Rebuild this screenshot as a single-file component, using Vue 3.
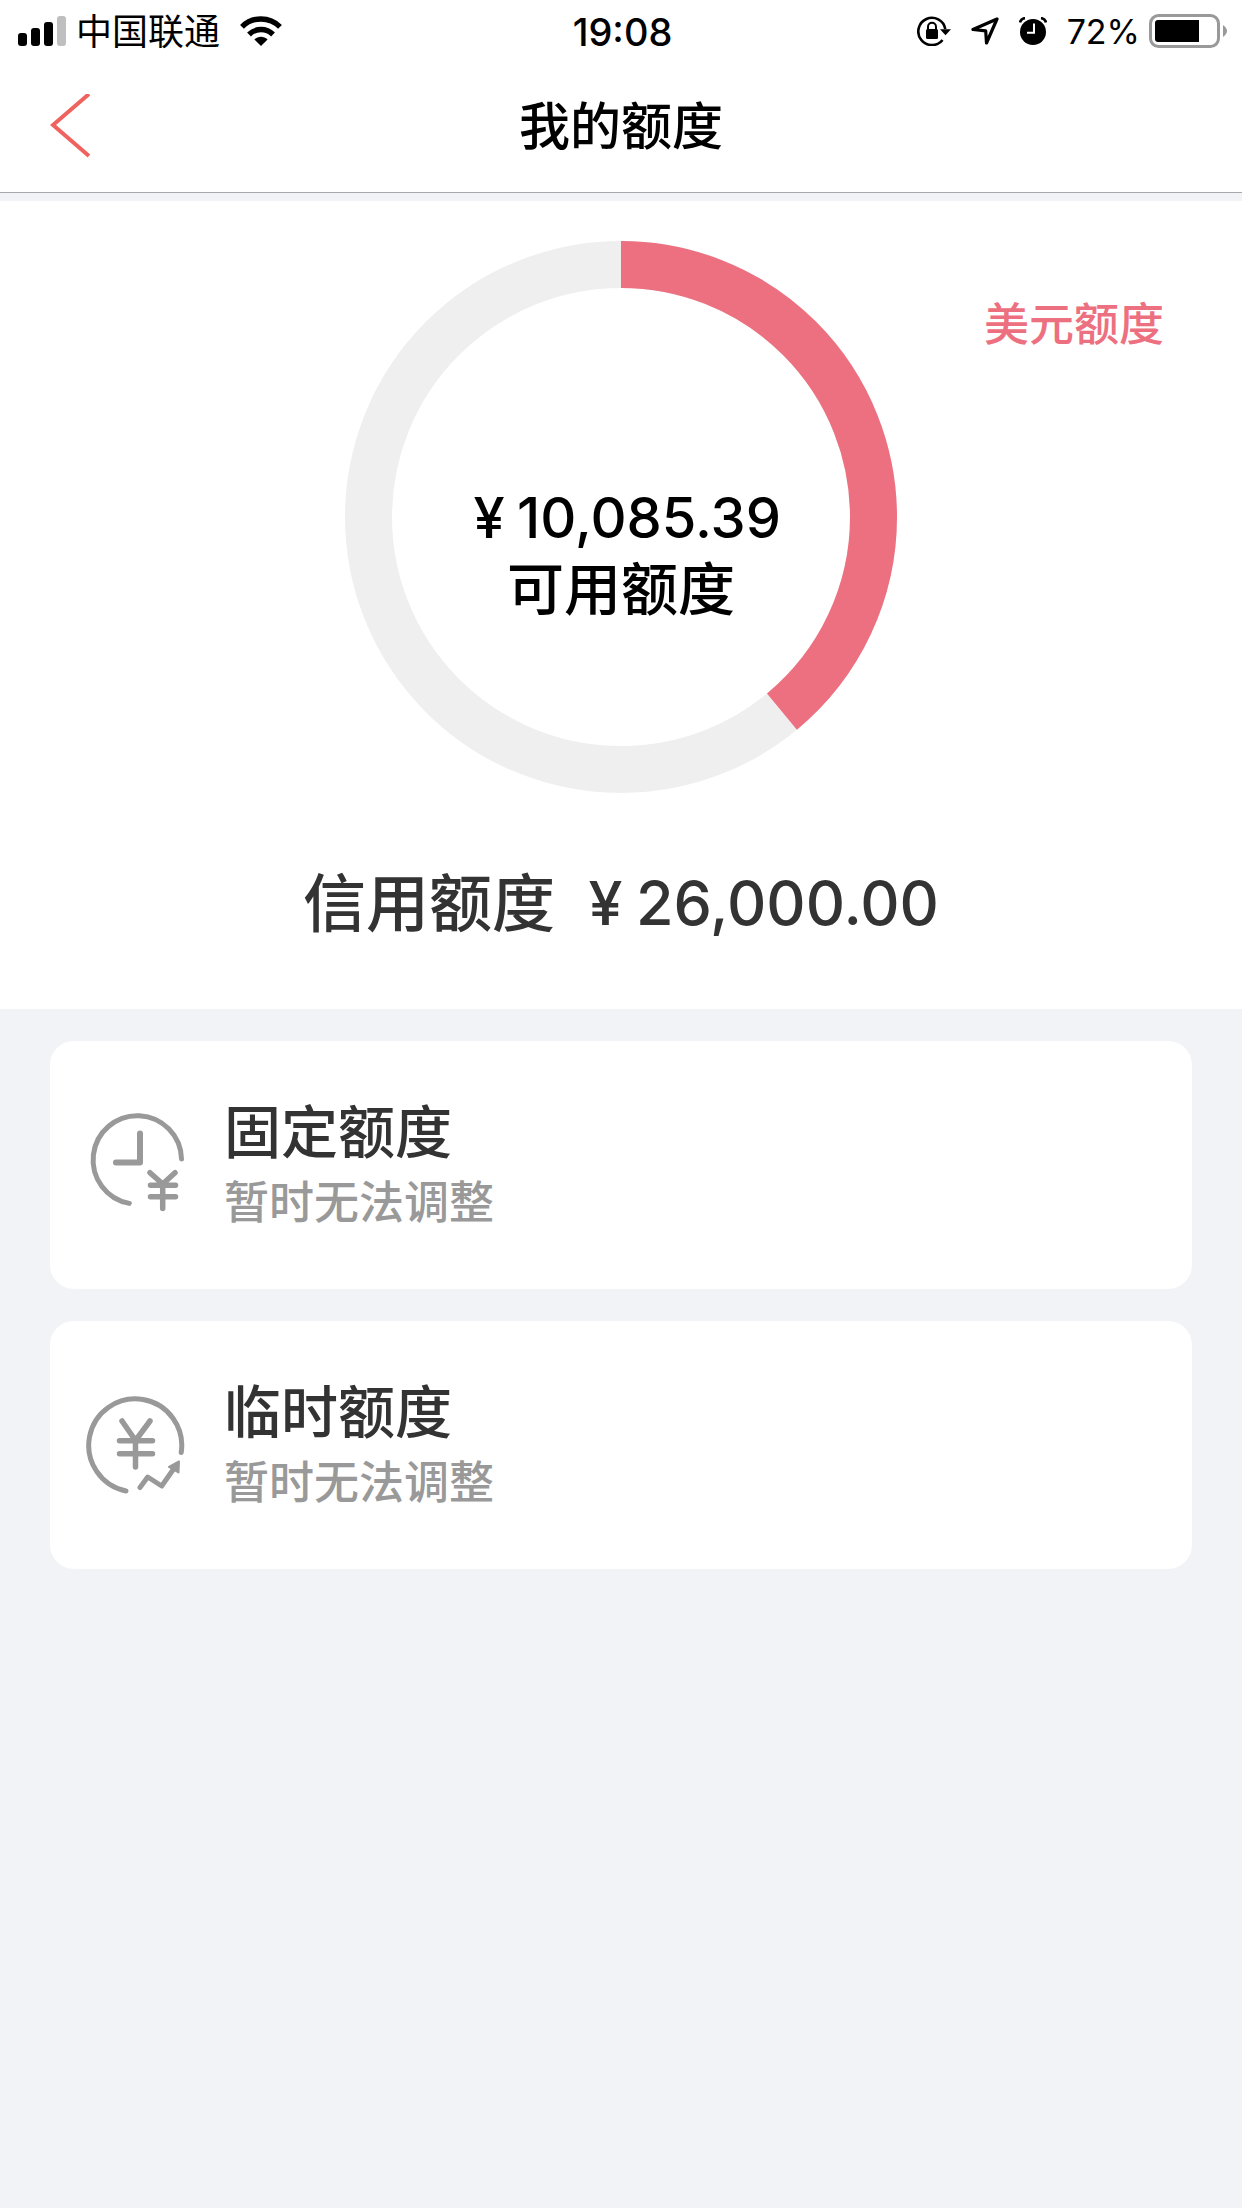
<script setup>
import { computed } from 'vue';

const total = 26000;
const available = 10085.39;

const format = (value) =>
  value.toLocaleString('en-US', { minimumFractionDigits: 2, maximumFractionDigits: 2 });

// Part of the ring that is filled, in whole percent
const percent = computed(() => Math.round((available / total) * 100));

const quotas = [
  { id: 'fixed', title: '固定额度', note: '暂时无法调整' },
  { id: 'temporary', title: '临时额度', note: '暂时无法调整' },
];
</script>

<template>
  <div class="page">
    <div class="status-bar">
      <div class="status-left">
        <svg class="signal" width="48" height="30" viewBox="0 0 48 30" aria-hidden="true">
          <rect x="0" y="17" width="9" height="13" rx="3" />
          <rect x="13" y="12" width="9" height="18" rx="3" />
          <rect x="26" y="6" width="9" height="24" rx="3" />
          <rect x="39" y="0" width="9" height="30" rx="3" fill="#bfbfbf" />
        </svg>
        <span class="carrier">中国联通</span>
        <svg class="wifi" width="42" height="30" viewBox="0 0 42 30" aria-hidden="true">
          <g fill="none" stroke="#000" stroke-width="5.4">
            <path d="M2 10.8C12.500 .3 29.500 .3 40 10.800" />
            <path d="M9 18.500C15.600 11.900 26.400 11.900 33 18.500" />
          </g>
          <path d="M21 30l-6.600-6.600c3.700-3.500 9.500-3.500 13.200 0z" />
        </svg>
      </div>
      <span class="clock">19:08</span>
      <div class="status-right">
        <!-- rotation lock -->
        <svg class="lock" width="34" height="30" viewBox="0 0 34 30" aria-hidden="true">
          <path d="M25.500 24A13.600 13.600 0 1 1 28.300 13" fill="none" stroke="#000" stroke-width="2.600" />
          <path d="M23 13.200h11l-5.500 6z" />
          <rect x="9" y="13" width="12" height="10" rx="1.500" />
          <path d="M11 14v-3.200a4 4 0 0 1 8 0v3.200" fill="none" stroke="#000" stroke-width="2" />
        </svg>
        <!-- location -->
        <svg class="location" width="28" height="28" viewBox="0 0 28 28" aria-hidden="true">
          <path d="M26 2L2 12.500l12.700 1.300L15.500 26z" fill="none" stroke="#000" stroke-width="3.200" stroke-linejoin="round" />
        </svg>
        <!-- alarm -->
        <svg class="alarm" width="28" height="28" viewBox="0 0 28 28" aria-hidden="true">
          <circle cx="14" cy="15" r="13" />
          <path d="M1 5.500Q2 1.500 6 1.200M27 5.500Q26 1.500 22 1.200" fill="none" stroke="#000" stroke-width="2.800" />
          <path d="M15 6.500v9.300H8" fill="none" stroke="#fff" stroke-width="2" />
        </svg>
        <span class="battery-text">72%</span>
        <svg width="78" height="34" viewBox="0 0 78 34" aria-hidden="true">
          <rect x="1.500" y="1.500" width="68" height="31" rx="8" fill="none" stroke="#999" stroke-width="3" />
          <path d="M6 9a3 3 0 0 1 3-3h41v22H9a3 3 0 0 1-3-3z" />
          <path d="M74 11q4 3 4 6t-4 6z" fill="#999" />
        </svg>
      </div>
    </div>

    <header class="nav">
      <button class="back" type="button" aria-label="返回">
        <svg width="40" height="64" viewBox="0 0 40 64" aria-hidden="true">
          <path d="M39 0L3 31l36 31" fill="none" stroke="#f0625d" stroke-width="4" />
        </svg>
      </button>
      <h1>我的额度</h1>
    </header>

    <section class="summary">
      <div class="chart-row">
        <div class="chart">
          <svg viewBox="0 0 552 552" aria-hidden="true">
            <g fill="none" stroke-width="47" transform="rotate(-90 276 276)">
              <circle cx="276" cy="276" r="252.500" stroke="#efefef" />
              <circle
                cx="276"
                cy="276"
                r="252.500"
                stroke="#ed7080"
                pathLength="100"
                :stroke-dasharray="`${percent} 100`"
              />
            </g>
          </svg>
          <div class="chart-label">
            <span class="amount"><span class="yen">¥</span>{{ format(available) }}</span>
            <span>可用额度</span>
          </div>
        </div>
        <a class="dollar" href="#">美元额度</a>
      </div>
      <p class="total">
        <span>信用额度</span>
        <span class="total-amount"><span class="yen">¥</span>{{ format(total) }}</span>
      </p>
    </section>

    <main class="cards">
      <article v-for="quota in quotas" :key="quota.id" class="card">
        <svg class="card-icon" width="104" height="104" viewBox="0 0 104 104" aria-hidden="true">
          <g v-if="quota.id === 'fixed'">
            <path d="M97.500 48A44.200 44.200 0 1 0 45.300 92.400" stroke-width="5" />
            <path d="M56 22.500v29H32" stroke-width="6" />
            <path d="M66 61.700L78.700 73 91 61.700M66.500 74.300h25M66.500 85.700h25M78.700 73v24.500" stroke-width="5.500" />
          </g>
          <g v-else>
            <path d="M97.200 61.500A46.500 46.500 0 1 0 42 100" stroke-width="5" />
            <path d="M38 30l13.500 19.500L66 30M35.500 49.700h33M35.500 62.700h33M51.500 49.500V76" stroke-width="5.500" />
            <path d="M56 96.500L63.700 86l14 9L91 76" stroke-width="5" />
            <path d="M95 70.500L85 76l9.500 5.500z" fill="#999" stroke-width="2" />
          </g>
        </svg>
        <div class="card-text">
          <h2>{{ quota.title }}</h2>
          <p>{{ quota.note }}</p>
        </div>
      </article>
    </main>
  </div>
</template>

<style>
body {
  background: #f2f3f7;
}
</style>

<style scoped>
.page {
  min-height: 100vh;
  background: #f2f3f7;
  color: #000;
  font-family: Inter, "Noto Sans CJK SC", sans-serif;
}

h1,
h2,
p {
  margin: 0;
}

svg {
  display: block;
  flex-shrink: 0;
}

/* Status bar */
.status-bar {
  display: grid;
  grid-template-columns: 1fr auto 1fr;
  align-items: center;
  height: 60px;
  padding: 0 15px 0 18px;
  background: #fff;
  font-size: 36px;
  line-height: 60px;
}

.status-left,
.status-right {
  display: flex;
  align-items: center;
}

.status-right {
  justify-content: flex-end;
}

.carrier {
  margin: 0 20px 0 10px;
}

.carrier,
.clock,
.battery-text {
  padding-top: 2px;
}

.clock {
  font-size: 38px;
  font-weight: 500;
}

.lock,
.location,
.alarm {
  margin-right: 20px;
}

.battery-text {
  margin-right: 9px;
  font-size: 34px;
}

/* Title bar */
.nav {
  display: grid;
  grid-template-columns: 1fr auto 1fr;
  align-items: center;
  height: 132px;
  padding: 0 50px;
  background: #fff;
  border-bottom: 1px solid #a8a8ad;
}

.back {
  justify-self: start;
  padding: 0;
  border: none;
  background: none;
  cursor: pointer;
}

.nav h1 {
  padding-top: 2px;
  font-size: 51px;
  font-weight: 500;
  line-height: 72px;
}

/* Quota chart */
.summary {
  margin-top: 8px;
  padding: 40px 78px 70px;
  background: #fff;
}

.chart-row {
  display: grid;
  grid-template-columns: 1fr auto 1fr;
}

.chart {
  display: grid;
  grid-column: 2;
  width: 552px;
}

.chart > * {
  grid-area: 1 / 1;
}

.chart-label {
  display: flex;
  flex-direction: column;
  align-items: center;
  align-self: center;
  padding-top: 74px;
  font-size: 57px;
  font-weight: 500;
  line-height: 72px;
}

.amount {
  font-size: 56px;
}

/* The currency sign takes a full character cell */
.yen {
  display: inline-block;
  width: 1em;
  text-align: center;
}

.dollar {
  justify-self: end;
  align-self: start;
  margin-top: 54px;
  color: #ed7080;
  font-size: 45px;
  font-weight: 500;
  line-height: 60px;
  text-decoration: none;
}

.total {
  display: flex;
  justify-content: center;
  gap: 20px;
  margin-top: 74px;
  color: #333;
  font-size: 63px;
  font-weight: 500;
  line-height: 72px;
}

.total-amount {
  font-size: 61px;
}

/* Quota cards */
.cards {
  display: flex;
  flex-direction: column;
  gap: 32px;
  padding: 32px 50px;
}

.card {
  display: flex;
  align-items: center;
  gap: 36px;
  padding: 52px 34px 56px;
  border-radius: 24px;
  background: #fff;
}

.card-icon {
  fill: none;
  stroke: #999;
  stroke-linecap: round;
  stroke-linejoin: round;
}

.card h2 {
  color: #333;
  font-size: 57px;
  font-weight: 500;
  line-height: 80px;
}

.card p {
  color: #999;
  font-size: 45px;
  font-weight: 500;
  line-height: 60px;
}
</style>
